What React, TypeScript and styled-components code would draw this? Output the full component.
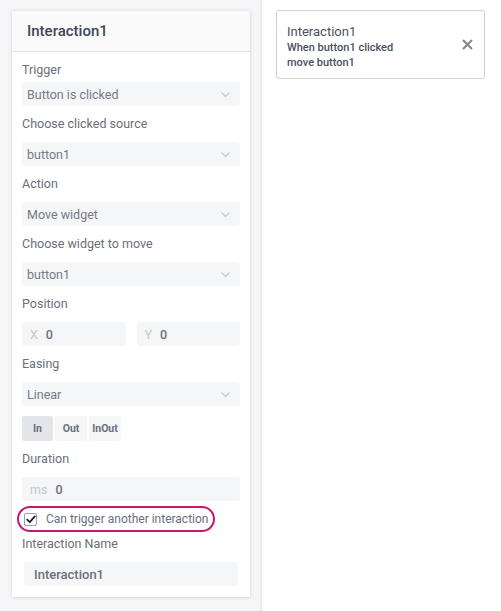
import { createGlobalStyle } from 'styled-components';
import styled from 'styled-components';

const GlobalStyle = createGlobalStyle`
	html, body {
		margin: 0;
		padding: 0;
		background: #ffffff;
		font-family: Roboto, 'Noto Sans', sans-serif;
	}
	* {
		box-sizing: border-box;
	}
`;

const Page = styled.div`
	display: flex;
	width: 501px;
	height: 611px;
	background: #ffffff;
`;

const Sidebar = styled.div`
	width: 262px;
	flex-shrink: 0;
	background: #f6f6f8;
	border-right: 2px solid #ededf0;
	padding: 11px 10px 0 12px;
`;

const Panel = styled.div`
	width: 238px;
	background: #ffffff;
	box-shadow: 0 0 4px rgba(0, 0, 0, 0.12), 0 1px 2px rgba(0, 0, 0, 0.06);
`;

const PanelHeader = styled.div`
	height: 41px;
	display: flex;
	align-items: center;
	padding: 0 15px;
	background: #fafafb;
	border-bottom: 1px solid #e3e4e8;
	color: #3f4656;
	font-size: 15px;
	font-weight: 500;
`;

const PanelBody = styled.div`
	display: flex;
	flex-direction: column;
	padding: 10px 10px 11px;
`;

const Label = styled.div<{ $tight?: boolean; $top?: number }>`
	height: 16px;
	line-height: 16px;
	font-size: 12.5px;
	font-weight: 400;
	color: #6a6f7a;
	white-space: nowrap;
	margin-top: ${({ $top }) => ($top === undefined ? 10 : $top)}px;
	margin-bottom: ${({ $tight }) => ($tight ? '4px' : '10px')};
`;

const SelectBox = styled.div`
	height: 24px;
	display: flex;
	align-items: center;
	justify-content: space-between;
	padding: 1px 10px 0 5px;
	background: #f5f6f8;
	border-radius: 3px;
	color: #757a85;
	font-size: 12.5px;
	font-weight: 400;
`;

const Chevron = () => (
	<svg width="9" height="6" viewBox="0 0 9 6" fill="none">
		<path d="M1 1l3.5 3.5L8 1" stroke="#c6c9cf" strokeWidth="1.4" strokeLinecap="round" strokeLinejoin="round" />
	</svg>
);

const InputRow = styled.div`
	display: grid;
	grid-template-columns: 1fr 1fr;
	gap: 11px;
`;

const InputBox = styled.div<{ $inset?: boolean }>`
	height: 24px;
	display: flex;
	align-items: center;
	gap: 8px;
	padding: 1px 8px 0;
	margin: ${({ $inset }) => ($inset ? '0 2px' : '0')};
	background: #f5f6f8;
	border-radius: 3px;
	font-size: 12.5px;
	font-weight: 500;
	color: #6b707c;
`;

const Prefix = styled.span`
	color: #c3c6cc;
	font-weight: 400;
`;

const NameText = styled.span`
	padding-left: 2px;
	font-size: 13px;
	color: #6b707c;
`;

const Segments = styled.div`
	display: flex;
	gap: 2px;
	margin-top: 10px;
`;

const Segment = styled.div<{ $active?: boolean }>`
	height: 25px;
	display: flex;
	align-items: center;
	justify-content: center;
	padding: 0 2px;
	width: ${({ $active }) => ($active ? '31px' : '32px')};
	background: ${({ $active }) => ($active ? '#e3e5e9' : '#f5f6f8')};
	border-radius: 2px;
	color: #6a707c;
	font-size: 10.5px;
	font-weight: 700;
`;

const CheckRow = styled.div`
	margin: 5px 0 0 -5px;
	width: 198px;
	height: 26px;
	display: flex;
	align-items: center;
	gap: 9px;
	padding-left: 5px;
	border: 2px solid #c8176f;
	border-radius: 13px;
	color: #6b707c;
	font-size: 12px;
	font-weight: 400;
	white-space: nowrap;
`;

const CheckBox = styled.div`
	width: 13px;
	height: 13px;
	display: flex;
	align-items: center;
	justify-content: center;
	border: 1px solid #9aa0a8;
	border-radius: 2px;
	background: #ffffff;
`;

const Main = styled.div`
	flex: 1;
	padding: 10px 16px 0 14px;
`;

const Card = styled.div`
	position: relative;
	width: 209px;
	height: 69px;
	padding: 12px 10px 0 10px;
	border: 1px solid #cfd1d5;
	border-radius: 3px;
	background: #ffffff;
	color: #4a5060;
`;

const CardTitle = styled.div`
	font-size: 13px;
	line-height: 17px;
`;

const CardText = styled.div`
	font-size: 11px;
	font-weight: 500;
	line-height: 15px;
`;

const CloseButton = styled.div`
	position: absolute;
	right: 11px;
	top: 28px;
	display: flex;
`;

const fields: { label: string; value: string }[] = [
	{ label: 'Choose clicked source', value: 'button1' },
	{ label: 'Action', value: 'Move widget' },
	{ label: 'Choose widget to move', value: 'button1' },
];

export default function App() {
	return (
		<Page>
			<GlobalStyle />
			<Sidebar>
				<Panel>
					<PanelHeader>Interaction1</PanelHeader>
					<PanelBody>
						<Label $top={0} $tight>Trigger</Label>
						<SelectBox>
							<span>Button is clicked</span>
							<Chevron />
						</SelectBox>
						{fields.map((f) => (
							<div key={f.label}>
								<Label>{f.label}</Label>
								<SelectBox>
									<span>{f.value}</span>
									<Chevron />
								</SelectBox>
							</div>
						))}
						<Label>Position</Label>
						<InputRow>
							<InputBox>
								<Prefix>X</Prefix>
								<span>0</span>
							</InputBox>
							<InputBox>
								<Prefix>Y</Prefix>
								<span>0</span>
							</InputBox>
						</InputRow>
						<Label>Easing</Label>
						<SelectBox>
							<span>Linear</span>
							<Chevron />
						</SelectBox>
						<Segments>
							<Segment $active>In</Segment>
							<Segment>Out</Segment>
							<Segment>InOut</Segment>
						</Segments>
						<Label>Duration</Label>
						<InputBox>
							<Prefix>ms</Prefix>
							<span>0</span>
						</InputBox>
						<CheckRow>
							<CheckBox>
								<svg width="10" height="9" viewBox="0 0 10 9" fill="none">
									<path d="M1.2 4.6l2.6 2.6L8.8 1.4" stroke="#1b2236" strokeWidth="1.8" strokeLinecap="round" strokeLinejoin="round" />
								</svg>
							</CheckBox>
							<span>Can trigger another interaction</span>
						</CheckRow>
						<Label $top={4}>Interaction Name</Label>
						<InputBox $inset>
							<NameText>Interaction1</NameText>
						</InputBox>
					</PanelBody>
				</Panel>
			</Sidebar>
			<Main>
				<Card>
					<CardTitle>Interaction1</CardTitle>
					<CardText>When button1 clicked</CardText>
					<CardText>move button1</CardText>
					<CloseButton>
						<svg width="11" height="11" viewBox="0 0 11 11" fill="none">
							<path d="M1.5 1.5l8 8M9.5 1.5l-8 8" stroke="#80858f" strokeWidth="2" strokeLinecap="round" />
						</svg>
					</CloseButton>
				</Card>
			</Main>
		</Page>
	);
}
